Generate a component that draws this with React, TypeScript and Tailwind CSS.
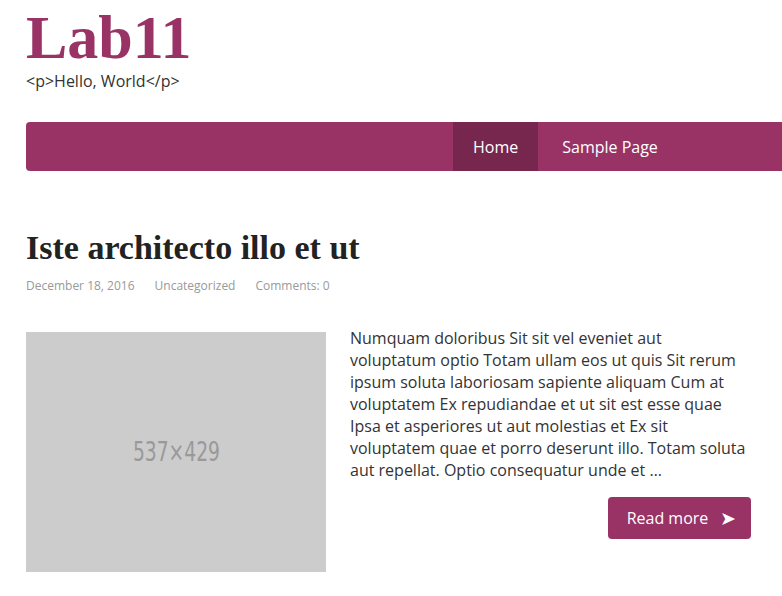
export default function App() {
  return (
    <div className="w-[782px] h-[596px] overflow-hidden bg-white font-['Open_Sans',sans-serif] text-[#333]">
      {/* Header */}
      <header className="pl-[26px] pt-[2px]">
        <h1 className="font-['Liberation_Serif',serif] font-bold text-[62px] leading-[70px] text-[#993366]">
          Lab11
        </h1>
        <p className="text-[16px] leading-[20px] -mt-[1px]">&lt;p&gt;Hello, World&lt;/p&gt;</p>
      </header>

      {/* Nav */}
      <nav className="ml-[26px] mt-[31px] w-[800px] h-[49px] bg-[#993366] rounded-l-[4px] flex pl-[427px]">
        <a className="flex items-center px-[20px] bg-[#77264e] text-white text-[16px]">Home</a>
        <a className="flex items-center px-[24px] text-white text-[16px]">Sample Page</a>
      </nav>

      {/* Post */}
      <article className="pl-[26px] pt-[58px]">
        <h2 className="font-['Liberation_Serif',serif] font-bold text-[34px] leading-[40px] text-[#222] -mt-[1px]">
          Iste architecto illo et ut
        </h2>
        <div className="flex gap-[20px] mt-[10px] text-[12px] leading-[16px] text-[#999]">
          <span>December 18, 2016</span>
          <span>Uncategorized</span>
          <span>Comments: 0</span>
        </div>

        <div className="flex mt-[38px]">
          <div className="w-[300px] h-[240px] bg-[#cccccc] flex items-center justify-center shrink-0">
            <span className="font-['DejaVu_Sans_Condensed','DejaVu_Sans',sans-serif] text-[#999] text-[26px] scale-x-[0.8]">
              537×429
            </span>
          </div>
          <div className="ml-[24px] w-[401px] flex flex-col -mt-[5px]">
            <p className="text-[16px] leading-[22px]">
              Numquam doloribus Sit sit vel eveniet aut voluptatum optio Totam ullam eos ut quis Sit rerum
              ipsum soluta laboriosam sapiente aliquam Cum at voluptatem Ex repudiandae et ut sit est esse quae
              Ipsa et asperiores ut aut molestias et Ex sit voluptatem quae et porro deserunt illo. Totam soluta
              aut repellat. Optio consequatur unde et …
            </p>
            <div className="flex justify-end mt-[16px]">
              <a className="h-[42px] w-[143px] bg-[#993366] rounded-[4px] text-white text-[16px] flex items-center justify-center gap-[12px] pl-[4px]">
                Read more <span className="text-[19px] leading-none">➤</span>
              </a>
            </div>
          </div>
        </div>
      </article>
    </div>
  );
}
